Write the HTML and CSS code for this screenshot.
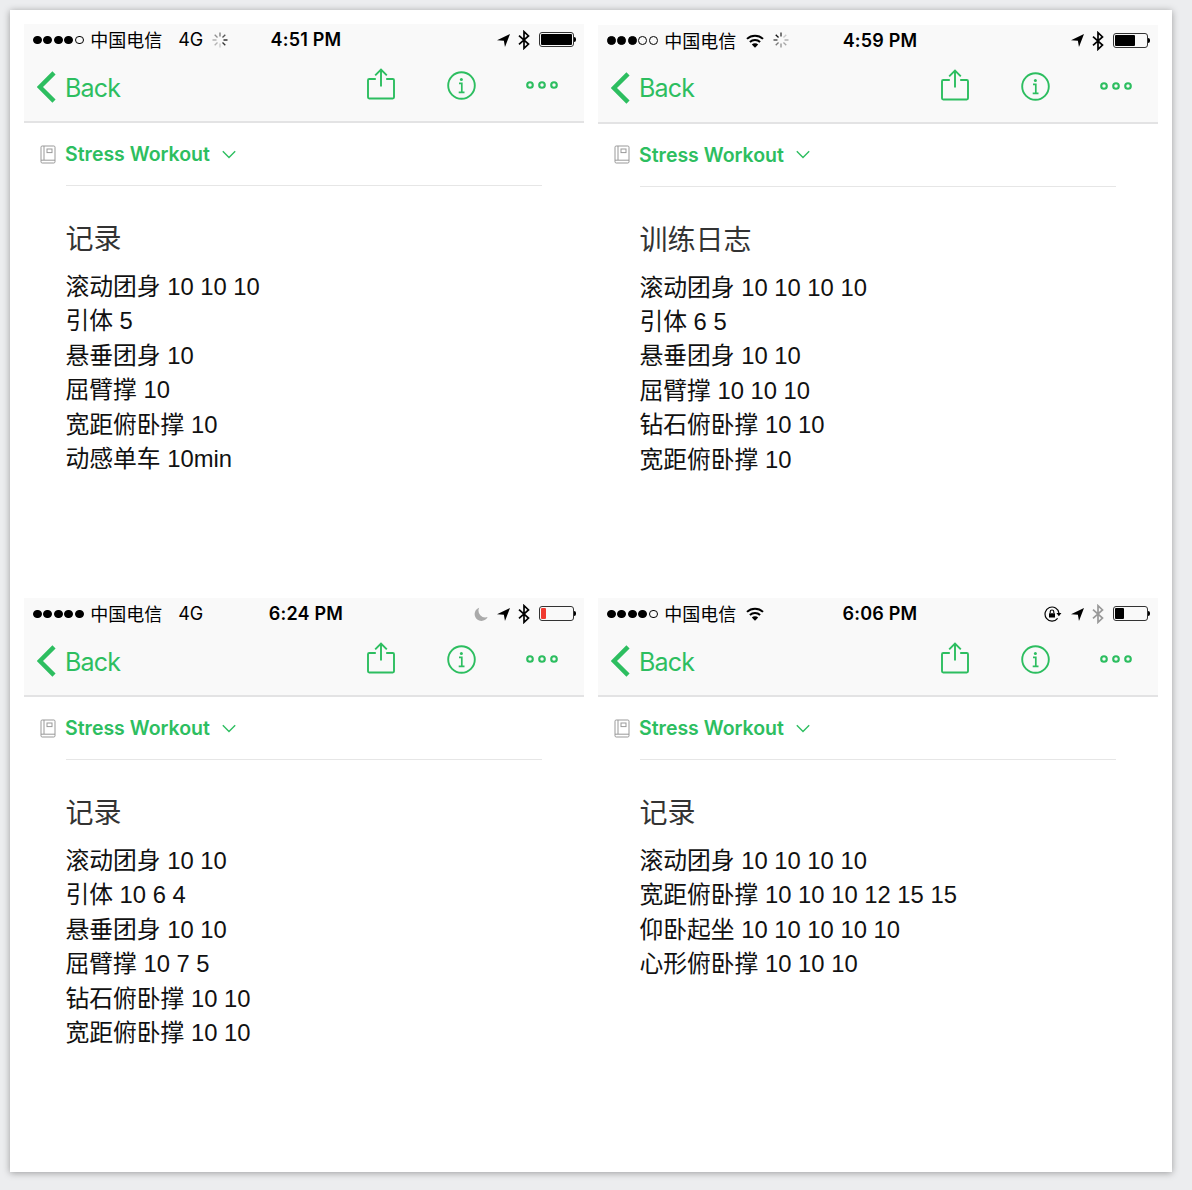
FILE: index.html
```html
<!DOCTYPE html>
<html lang="zh-CN">
<head>
<meta charset="utf-8">
<title>Stress Workout</title>
<link rel="stylesheet" href="styles.css">
</head>
<body>
<svg class="sprite" aria-hidden="true">
  <symbol id="wifi" viewBox="0 0 18 14"><path d="M1 4.9a11.6 11.6 0 0 1 16 0M3.9 8a7.4 7.4 0 0 1 10.2 0" fill="none" stroke="#000" stroke-width="2"/><path d="M5.8 10.6a4.6 4.6 0 0 1 6.4 0L9 13.8z"/></symbol>
  <symbol id="spinner" viewBox="-8 -8 16 16"><g stroke-width="1.3" stroke="#111"><path d="M0-3.5V-7.5" opacity=".55"/><path d="M2.5-2.5 5.3-5.3" opacity=".7"/><path d="M3.5 0h4" opacity="1"/><path d="M2.5 2.5 5.3 5.3" opacity=".85"/><path d="M0 3.5v4" opacity=".2"/><path d="M-2.5 2.5-5.3 5.3" opacity=".3"/><path d="M-3.5 0h-4" opacity=".35"/><path d="M-2.5-2.5-5.3-5.3" opacity=".45"/></g></symbol>
  <symbol id="arrow" viewBox="0 0 14 14"><path d="M14 0 8.6 14 7.4 7.4 0 6.6z"/></symbol>
  <symbol id="bt" viewBox="0 0 12 20"><path d="M1 5.6 10.5 14 6 18.3V1.7L10.5 6 1 14.4" fill="none" stroke="currentColor" stroke-width="1.7"/></symbol>
  <symbol id="moon" viewBox="0 0 14 14"><path d="M5.2.7A6.8 6.8 0 1 0 13.6 10 6.8 6.8 0 0 1 5.2.7z" fill="#aaa"/></symbol>
  <symbol id="lock" viewBox="0 0 18 16"><path d="M13.6 12.3A7 7 0 1 1 15 7.2" fill="none" stroke="#000" stroke-width="1.2"/><path d="M12.4 7h5l-2.5 3.2zM5 7.2h6v4.4H5z"/><path d="M6.2 7V5.8a1.8 1.8 0 0 1 3.6 0V7" fill="none" stroke="#000" stroke-width="1.1"/></symbol>
  <symbol id="back" viewBox="0 0 19 32"><path d="M17 1.9 2.9 16 17 30.1" fill="none" stroke="#2dbe60" stroke-width="4.5"/></symbol>
  <symbol id="share" viewBox="0 0 28 32"><path d="M8.8 11H2.2a1.2 1.2 0 0 0-1.2 1.2v17.1a1.2 1.2 0 0 0 1.2 1.2h23.6a1.2 1.2 0 0 0 1.2-1.2V12.2a1.2 1.2 0 0 0-1.2-1.2h-6.6M14 18.5V1.6M8.2 7.3 14 1.5l5.8 5.8" fill="none" stroke="#2dbe60" stroke-width="1.9"/></symbol>
  <symbol id="info" viewBox="0 0 29 29"><circle cx="14.5" cy="14.5" r="13.3" fill="none" stroke="#2dbe60" stroke-width="1.9"/><circle cx="14.4" cy="8.6" r="1.5" fill="#2dbe60"/><path d="M12 12.4h2.8v9M11.7 21.4h5.8" fill="none" stroke="#2dbe60" stroke-width="1.7"/></symbol>
  <symbol id="more" viewBox="0 0 32 8"><g fill="none" stroke="#2dbe60" stroke-width="2.1"><circle cx="4" cy="4" r="2.8"/><circle cx="16" cy="4" r="2.8"/><circle cx="28" cy="4" r="2.8"/></g></symbol>
  <symbol id="book" viewBox="0 0 16 19"><g fill="none" stroke="#999" stroke-width="1"><rect x="1" y="1" width="14" height="17" rx="1.2"/><path d="M1 15.2h14M4 1v14"/><rect x="7" y="4" width="5" height="3.6"/></g></symbol>
  <symbol id="down" viewBox="0 0 14 9"><path d="M.8 1.2 7 7.4l6.2-6.2" fill="none" stroke="#2dbe60" stroke-width="1.4"/></symbol>
</svg>
<main class="sheet"></main>
<script src="app.js"></script>
</body>
</html>
```
FILE: styles.css
```css
body {
  margin: 0;
  padding: 10px;
  background: #ecedef;
  font-family: Inter, "Noto Sans CJK SC", sans-serif;
}
.sprite { display: none; }
svg { display: block; flex: none; }
.sheet {
  box-sizing: border-box;
  width: 1162px;
  height: 1162px;
  padding: 14px;
  display: grid;
  grid-template-columns: 560px 560px;
  grid-template-rows: 560px 560px;
  gap: 14px;
  background: #fff;
  box-shadow: 0 1px 7px rgba(0, 0, 0, .35);
}
.top {
  height: 97px;
  background: #f9f9f9;
  border-bottom: 2px solid #e3e3e4;
}
.shifted { padding-top: .6px; }
.status {
  display: grid;
  grid-template-columns: 1fr auto 1fr;
  align-items: center;
  height: 32px;
  padding: 0 8px 0 9px;
  font-size: 18px;
  line-height: 32px;
}
.left, .right, .signal { display: flex; align-items: center; }
.right { justify-content: flex-end; }
.signal { gap: 1.7px; margin-right: 6.5px; }
.dot {
  box-sizing: border-box;
  width: 8.8px;
  height: 8.8px;
  border: 1px solid #000;
  border-radius: 50%;
}
.full { background: #000; }
.carrier { height: 32px; font-family: "Noto Sans CJK SC", sans-serif; line-height: 31px; }
.network { margin-left: 16px; letter-spacing: -.2px; }
.wifi { width: 18px; height: 14px; margin-left: 10px; }
.spinner { width: 16px; height: 16px; margin: -1px 0 0 9px; }
.spinner-late { transform: rotate(225deg); }
.time { padding-left: 3px; font-weight: 600; letter-spacing: .2px; }
.moon { width: 14px; height: 14px; margin-right: 9px; }
.lock { width: 18px; height: 16px; margin-right: 9px; }
.arrow { width: 13px; height: 13px; margin-right: 8px; }
.bt { width: 12px; height: 20px; margin-right: 9px; }
.dim { color: #999; }
.battery {
  box-sizing: border-box;
  width: 35px;
  height: 15px;
  margin-top: -1px;
  padding: 1px;
  border: 1px solid #333;
  border-radius: 3px;
}
.charge { height: 11px; border-radius: 1px; background: #000; }
.low { background: #f03a30; }
.cap { width: 2px; height: 5px; margin-top: -1px; border-radius: 0 2px 2px 0; background: #000; }
.nav {
  display: flex;
  align-items: center;
  height: 60px;
  padding: 0 26px 0 13px;
}
.back { width: 19px; height: 32px; margin-top: 2px; }
.label { margin: 3px auto 0 9px; color: #2dbe60; font-size: 25px; letter-spacing: -.8px; line-height: 32px; }
.share { width: 28px; height: 32px; margin: 0 52px 4px 0; }
.info { width: 29px; height: 29px; margin: 0 50px 1px 0; }
.more { width: 32px; height: 8px; margin-bottom: 2px; }
.notebook {
  display: flex;
  align-items: center;
  height: 62px;
  padding-left: 16px;
  color: #2dbe60;
  font-size: 19.5px;
  font-weight: 600;
}
.book { width: 16px; height: 19px; margin-right: 9px; }
.down { width: 14px; height: 9px; margin-left: 12px; }
.note { margin: 0 42px; border-top: 1px solid #e6e6e6; }
.title {
  margin: 31px 0 0 -.5px;
  color: #333;
  font: 400 28px/40px "Noto Sans CJK SC", sans-serif;
}
.line {
  margin: 0 0 0 -.6px;
  color: #111;
  font: 400 23.8px/34.4px "Liberation Sans", "Noto Sans CJK SC", sans-serif;
  white-space: nowrap;
}
.title + .line { margin-top: 13px; }
```
FILE: app.js
```js
const phones = [
  { bars: 4, net: '4G', spin: 'spinner', time: '4:51 PM', charge: 31, title: '记录',
    lines: ['滚动团身 10 10 10', '引体 5', '悬垂团身 10', '屈臂撑 10', '宽距俯卧撑 10', '动感单车 10min'] },
  { bars: 3, spin: 'spinner spinner-late', time: '4:59 PM', charge: 20, shifted: true, title: '训练日志',
    lines: ['滚动团身 10 10 10 10', '引体 6 5', '悬垂团身 10 10', '屈臂撑 10 10 10', '钻石俯卧撑 10 10', '宽距俯卧撑 10'] },
  { bars: 5, net: '4G', time: '6:24 PM', extra: 'moon', charge: 5, low: true, title: '记录',
    lines: ['滚动团身 10 10', '引体 10 6 4', '悬垂团身 10 10', '屈臂撑 10 7 5', '钻石俯卧撑 10 10', '宽距俯卧撑 10 10'] },
  { bars: 4, time: '6:06 PM', extra: 'lock', dim: true, charge: 9, title: '记录',
    lines: ['滚动团身 10 10 10 10', '宽距俯卧撑 10 10 10 12 15 15', '仰卧起坐 10 10 10 10 10', '心形俯卧撑 10 10 10'] }
];
const icon = (id, cls = id) => `<svg class="${cls}"><use href="#${id}"/></svg>`;
const dots = n => [0, 1, 2, 3, 4].map(i => `<i class="dot${i < n ? ' full' : ''}"></i>`).join('');

document.querySelector('.sheet').innerHTML = phones.map(p => `
<section class="phone${p.shifted ? ' shifted' : ''}">
  <header class="top">
    <div class="status">
      <div class="left"><span class="signal">${dots(p.bars)}</span><span class="carrier">中国电信</span>
        ${p.net ? `<span class="network">${p.net}</span>` : icon('wifi')}${p.spin ? icon('spinner', p.spin) : ''}</div>
      <span class="time">${p.time}</span>
      <div class="right">${p.extra ? icon(p.extra) : ''}${icon('arrow')}${icon('bt', p.dim ? 'bt dim' : 'bt')}
        <span class="battery"><div class="charge${p.low ? ' low' : ''}" style="width:${p.charge}px"></div></span><i class="cap"></i></div>
    </div>
    <nav class="nav">${icon('back')}<span class="label">Back</span>${icon('share')}${icon('info')}${icon('more')}</nav>
  </header>
  <div class="notebook">${icon('book')}<span>Stress Workout</span>${icon('down')}</div>
  <article class="note"><h1 class="title">${p.title}</h1>${p.lines.map(l => `<p class="line">${l}</p>`).join('')}</article>
</section>`).join('');
```
